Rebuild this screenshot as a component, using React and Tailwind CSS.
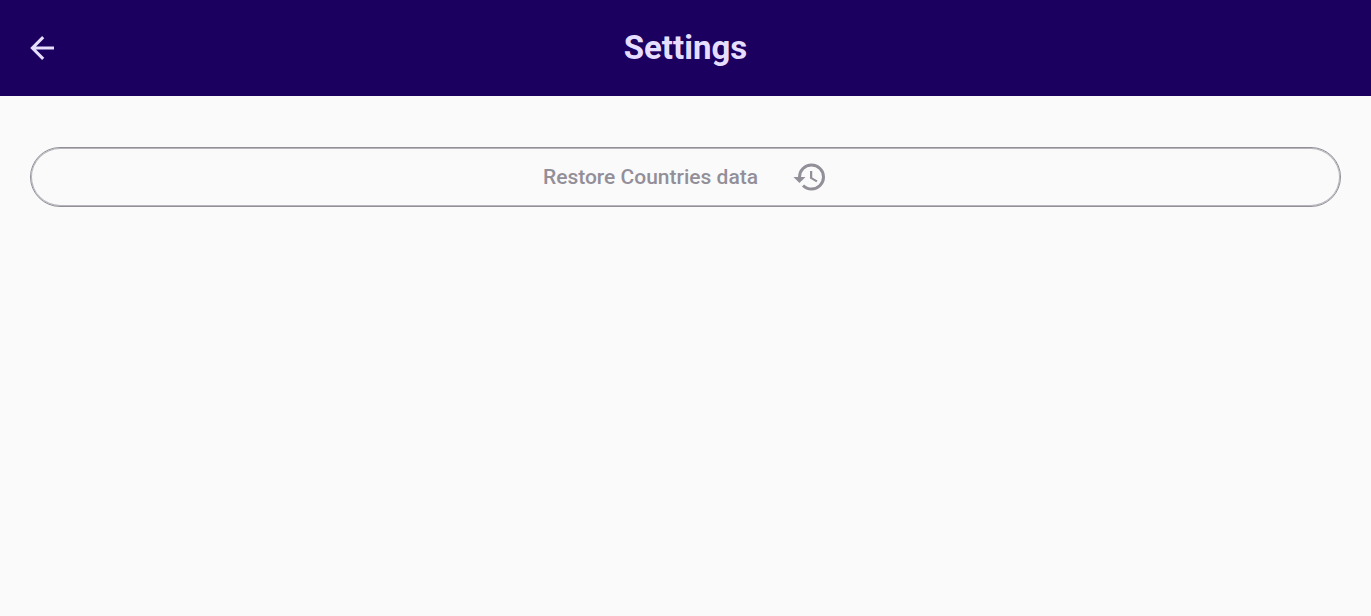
export default function App() {
  return (
    <div className="min-h-screen bg-[#fafafa] font-['Roboto',sans-serif]">
      <header className="grid h-24 grid-cols-[1fr_auto_1fr] items-center bg-[#1b0060] px-6 text-[#e6deff]">
        <button type="button" aria-label="Back" className="flex size-9 items-center justify-center">
          <svg viewBox="0 0 24 24" className="size-9" fill="currentColor" aria-hidden="true">
            <path d="M20 11v2H8l5.5 5.5-1.42 1.42L4.16 12l7.92-7.92L13.5 5.5 8 11h12z" />
          </svg>
        </button>
        <h1 className="text-[33px] leading-10 font-bold">Settings</h1>
      </header>
      <main className="px-[30px] pt-[51px]">
        <button
          type="button"
          className="flex h-[60px] w-full items-center justify-center gap-[34px] rounded-full border border-[#938f99] text-[21px] leading-8 font-medium text-[#938f99] inset-ring inset-ring-[#938f99]/65"
        >
          <span>Restore Countries data</span>
          <svg viewBox="0 0 24 24" className="size-9" fill="currentColor" aria-hidden="true">
            <path d="M13.5 8H12v5l4.28 2.54.72-1.21-3.5-2.08V8M13 3a9 9 0 0 0-9 9H1l3.96 4.03L9 12H6a7 7 0 0 1 7-7 7 7 0 0 1 7 7 7 7 0 0 1-7 7c-1.93 0-3.68-.79-4.94-2.07l-1.42 1.42A8.9 8.9 0 0 0 13 21a9 9 0 0 0 9-9 9 9 0 0 0-9-9" />
          </svg>
        </button>
      </main>
    </div>
  );
}
